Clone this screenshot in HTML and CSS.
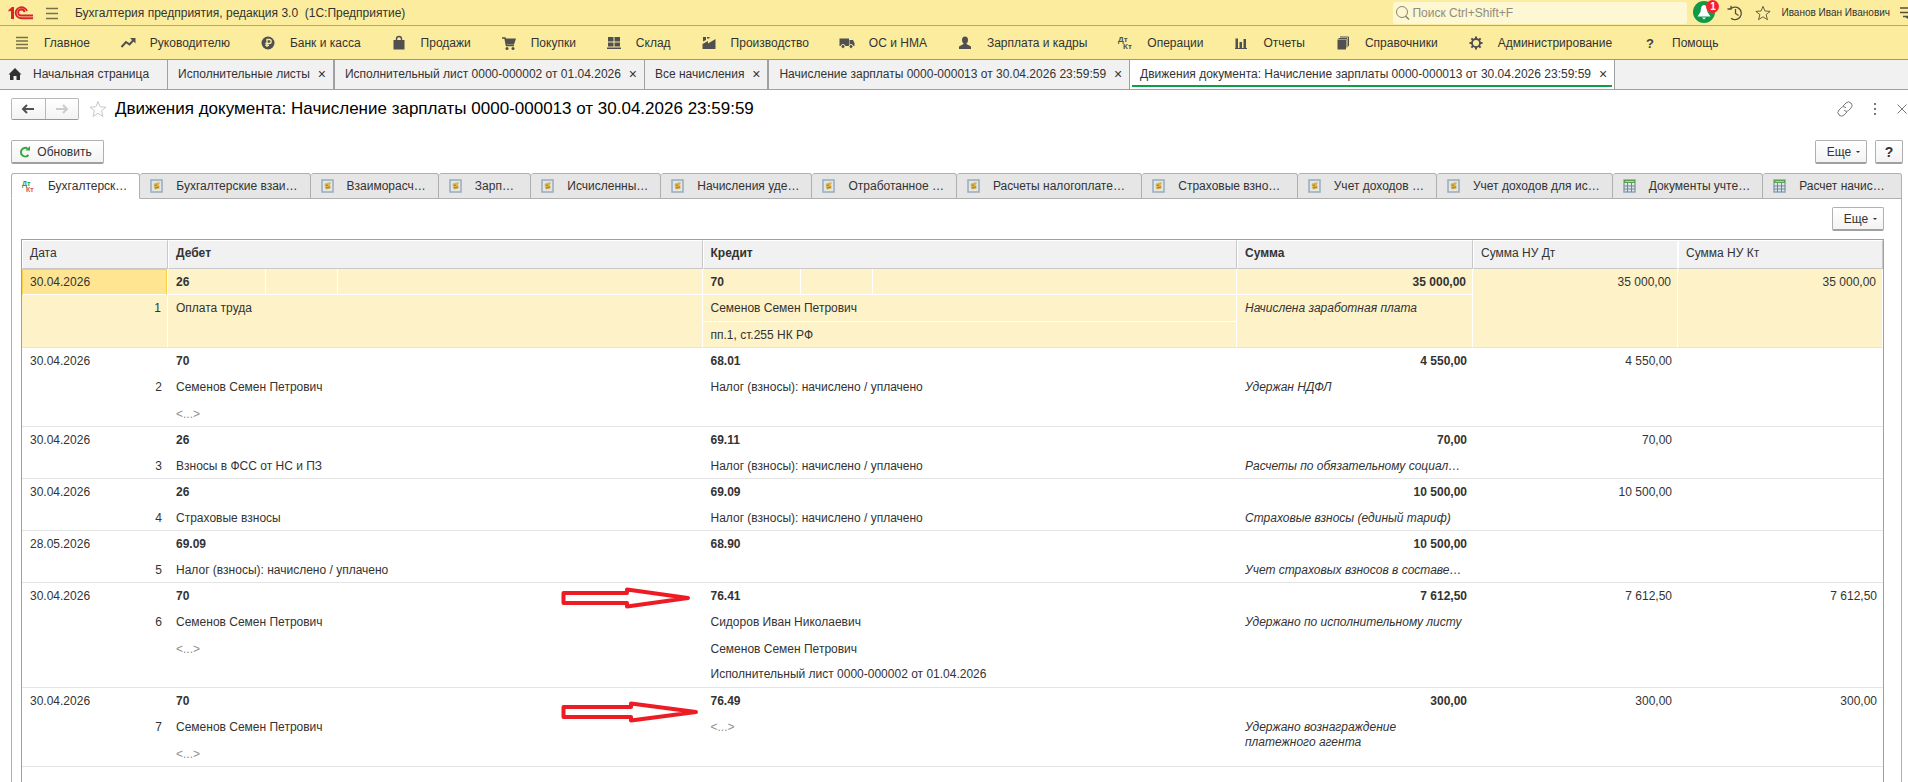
FILE: index.html
```
<!DOCTYPE html>
<html lang="ru">
<head>
    <meta charset="UTF-8">
    <meta name="viewport" content="width=device-width, initial-scale=1.0">
    <title>Бухгалтерия предприятия, редакция 3.0</title>
    <link rel="stylesheet" href="styles.css">
</head>
<body>
    <!-- Shared icons -->
    <svg class="sprite" aria-hidden="true">
        <symbol id="register" viewBox="0 0 14 14">
            <rect x="1" y="1" width="11" height="12" fill="#dfe6ec" stroke="#9aabba" stroke-width="1.500"/>
            <path d="M4 4.500L9.500 3V5L8.500 6L9.500 7V9.500L5 10.500L3.500 8L5 7L3.500 6z" fill="#dcb24a"/>
            <path d="M4.500 6.500L7 6M5 9L9 8" stroke="#a87c18"/>
        </symbol>
        <symbol id="sheet" viewBox="0 0 14 14">
            <rect x="1" y="1" width="11" height="12" fill="#dfe6ec" stroke="#8fa3b5" stroke-width="1.500"/>
            <rect x="1" y="1" width="11" height="3" fill="#5ba353"/>
            <path d="M1 7H12M1 10H12M4.500 4V13M8.500 4V13" stroke="#71869a"/>
            <path d="M2.500 2.500H11" stroke="#a8d5a0"/>
        </symbol>
        <symbol id="star" viewBox="0 0 18 18">
            <path d="M9 1.500L11.200 6.800L17 7.200L12.500 10.800L14 16.500L9 13.300L4 16.500L5.500 10.800L1 7.200L6.800 6.800z" fill="none" stroke="currentColor"/>
        </symbol>
    </svg>

    <header class="titlebar">
        <svg class="logo" viewBox="0 0 26 14" role="img" aria-label="1С">
            <path d="M0.500 4L4 1H6V13H3V5L0.500 5.500z" fill="#d9232e"/>
            <path d="M19 5A5.800 5.500 0 1 0 13.500 12.300H25M16.500 6A3.200 3 0 1 0 13.500 9.500H25" fill="none" stroke="#d9232e" stroke-width="1.900"/>
        </svg>
        <button class="plain" aria-label="Меню">
            <svg width="14" height="14" viewBox="0 0 14 14"><path d="M1 2.500H13M1 7.500H13M1 12.500H13" stroke="#77704a" stroke-width="1.300"/></svg>
        </button>
        <span class="app-name">Бухгалтерия предприятия, редакция 3.0 &nbsp;(1С:Предприятие)</span>
        <label class="search">
            <svg width="16" height="16" viewBox="0 0 16 16"><circle cx="7" cy="7" r="5.500" fill="none" stroke="#8a8568"/><path d="M10.500 11L14 14.500" stroke="#8a8568" stroke-width="1.500"/></svg>
            <input type="text" placeholder="Поиск Ctrl+Shift+F" aria-label="Поиск">
        </label>
        <button class="plain bell" aria-label="Оповещения">
            <svg width="22" height="22" viewBox="0 0 22 22"><circle cx="11" cy="11" r="11" fill="#0e9a48"/><path d="M11 4C8 4 8 8 7.500 11L4.500 15.500H17.500L14.500 11C14 8 14 4 11 4zM9 16.500H13L11 18.500z" fill="#fff"/></svg>
            <span class="badge">1</span>
        </button>
        <button class="plain history" aria-label="История">
            <svg width="16" height="16" viewBox="0 0 16 16"><path d="M3 4.500A6.300 6.300 0 1 1 4 13.200M0.500 4H4V0.800M8.500 4V8.500L11.500 10.500" fill="none" stroke="#55503a" stroke-width="1.300"/></svg>
        </button>
        <button class="plain favorites" aria-label="Избранное"><svg width="16" height="16"><use href="#star"/></svg></button>
        <a class="user" href="#">Иванов Иван Иванович</a>
        <button class="plain" aria-label="Настройки">
            <svg width="8" height="14" viewBox="0 0 8 14"><path d="M0 2H8M0 6.500H8M3 10.500H8" stroke="#55503a" stroke-width="1.500"/><path d="M4 10H8V13z" fill="#55503a"/></svg>
        </button>
    </header>

    <nav class="sections">
        <a href="#"><svg viewBox="0 0 18 18"><path d="M3 3.500H15M3 7H15M3 10.500H15M3 14H15" stroke="#77704a" stroke-width="1.300"/></svg>Главное</a>
        <a href="#"><svg viewBox="0 0 18 18"><path d="M2.500 13L7 8L10.500 10.500L15 5.500" fill="none" stroke="#505050" stroke-width="2"/><path d="M11 4H16.500V9.500z" fill="#505050"/></svg>Руководителю</a>
        <a href="#"><svg viewBox="0 0 18 18"><circle cx="9" cy="9" r="6.500" fill="#505050"/><path d="M8 13V5.500H10.200A2 2 0 0 1 10.200 9.500H6.300M6.300 11.300H10" fill="none" stroke="#fbec9e" stroke-width="1.300"/></svg>Банк и касса</a>
        <a href="#"><svg viewBox="0 0 18 18"><path d="M3.500 6H14.500V15.500H3.500z" fill="#505050"/><path d="M6.500 8V5A2.500 2.500 0 0 1 11.500 5V8" fill="none" stroke="#505050" stroke-width="1.400"/></svg>Продажи</a>
        <a href="#"><svg viewBox="0 0 18 18"><path d="M2 4H5L6.500 11.500H14" fill="none" stroke="#505050" stroke-width="1.500"/><path d="M5 4.500H16L14 10.500H6.500z" fill="#505050"/><circle cx="7" cy="14.500" r="1.500" fill="#505050"/><circle cx="13" cy="14.500" r="1.500" fill="#505050"/></svg>Покупки</a>
        <a href="#"><svg viewBox="0 0 18 18"><path d="M3 3H8.500V7.500H3zM9.500 3H15V7.500H9.500zM3 8.500H8.500V12.500H3zM9.500 8.500H15V12.500H9.500zM2 13.500H16V15H2z" fill="#505050"/></svg>Склад</a>
        <a href="#"><svg viewBox="0 0 18 18"><path d="M2.500 15V10L8 7V9.500L15.500 5V15zM3 3H6V6L3 7.500zM7 3H9.500V4.500H7z" fill="#505050"/></svg>Производство</a>
        <a href="#"><svg viewBox="0 0 18 18"><path d="M1.500 4.500H11V12H1.500zM11.500 6H15L16.500 9V12H11.500z" fill="#505050"/><circle cx="5" cy="12.500" r="2" fill="#505050" stroke="#fbec9e"/><circle cx="13" cy="12.500" r="2" fill="#505050" stroke="#fbec9e"/></svg>ОС и НМА</a>
        <a href="#"><svg viewBox="0 0 18 18"><ellipse cx="9" cy="6" rx="3" ry="3.500" fill="#505050"/><path d="M3 15V12.500L7.500 10V8H10.500V10L15 12.500V15z" fill="#505050"/></svg>Зарплата и кадры</a>
        <a href="#"><svg class="dtkt" viewBox="0 0 18 18"><text x="2" y="8">Дт</text><text x="7" y="15">Кт</text></svg>Операции</a>
        <a href="#"><svg viewBox="0 0 18 18"><path d="M3.500 4.500H6V14H3.500zM7.500 8H10V14H7.500zM11.500 5H14V14H11.500zM3 14H15V15H3z" fill="#505050"/></svg>Отчеты</a>
        <a href="#"><svg viewBox="0 0 18 18"><path d="M3.500 5.500H12V15.500H3.500z" fill="#505050"/><path d="M4.500 4.500H13V13.500M6 3H14.500V12" fill="none" stroke="#505050"/></svg>Справочники</a>
        <a href="#"><svg viewBox="0 0 18 18"><circle cx="9" cy="9" r="4" fill="none" stroke="#505050" stroke-width="1.800"/><path d="M9 2.500V5M9 13V15.500M2.500 9H5M13 9H15.500M4.400 4.400L6 6M12 12L13.600 13.600M4.400 13.600L6 12M12 6L13.600 4.400" stroke="#505050" stroke-width="2"/></svg>Администрирование</a>
        <a href="#"><svg class="help" viewBox="0 0 18 18"><text x="5" y="14">?</text></svg>Помощь</a>
    </nav>

    <div class="windows">
        <div class="window home">
            <a href="#"><svg width="14" height="14" viewBox="0 0 14 14"><path d="M7 1L13.500 7.500H12V13H8.500V9H5.500V13H2V7.500H0.500z" fill="#303030"/></svg>Начальная страница</a>
        </div>
        <div class="window"><a href="#">Исполнительные листы</a><button class="close" aria-label="Закрыть">×</button></div>
        <div class="window thick"><a href="#">Исполнительный лист 0000-000002 от 01.04.2026</a><button class="close" aria-label="Закрыть">×</button></div>
        <div class="window"><a href="#">Все начисления</a><button class="close" aria-label="Закрыть">×</button></div>
        <div class="window thick"><a href="#">Начисление зарплаты 0000-000013 от 30.04.2026 23:59:59</a><button class="close" aria-label="Закрыть">×</button></div>
        <div class="window active"><a href="#">Движения документа: Начисление зарплаты 0000-000013 от 30.04.2026 23:59:59</a><button class="close" aria-label="Закрыть">×</button></div>
    </div>

    <main class="form">
        <div class="form-title">
            <div class="history-buttons">
                <button aria-label="Назад"><svg width="14" height="12" viewBox="0 0 14 12"><path d="M13 6H3M6 2L2 6L6 10" fill="none" stroke="#505050" stroke-width="2"/></svg></button>
                <button aria-label="Вперед" disabled><svg width="14" height="12" viewBox="0 0 14 12"><path d="M1 6H11M8 2L12 6L8 10" fill="none" stroke="#cccccc" stroke-width="2"/></svg></button>
            </div>
            <button class="plain favorite" aria-label="В избранное"><svg width="18" height="18"><use href="#star"/></svg></button>
            <h1>Движения документа: Начисление зарплаты 0000-000013 от 30.04.2026 23:59:59</h1>
            <div class="form-actions">
                <button class="plain" aria-label="Ссылка"><svg width="16" height="16" viewBox="0 0 16 16"><path d="M6 5L9 2A3 3 0 0 1 14 7L11.500 9.500A3 3 0 0 1 7 9M10 11L7 14A3 3 0 0 1 2 9L4.500 6.500A3 3 0 0 1 9 7" fill="none" stroke="#777"/></svg></button>
                <button class="plain" aria-label="Еще действия"><svg width="4" height="12" viewBox="0 0 4 12"><path d="M1 0H3V2H1zM1 5H3V7H1zM1 10H3V12H1z" fill="#777"/></svg></button>
                <button class="plain" aria-label="Закрыть форму"><svg width="10" height="10" viewBox="0 0 10 10"><path d="M0.500 0.500L9.500 9.500M9.500 0.500L0.500 9.500" stroke="#777"/></svg></button>
            </div>
        </div>

        <div class="commands">
            <button class="btn refresh"><svg width="12" height="12" viewBox="0 0 12 12"><path d="M9.500 9A4.300 4.300 0 1 1 8.500 2.500" fill="none" stroke="#35a63f" stroke-width="2"/><path d="M6.500 4.500H11V0z" fill="#35a63f"/></svg>Обновить</button>
            <button class="btn more">Еще<i class="caret"></i></button>
            <button class="btn question">?</button>
        </div>

        <div class="tabs">
            <button class="active"><svg class="dtkt color" viewBox="0 0 14 14"><text x="0" y="7">Дт</text><text x="4" y="13">Кт</text></svg>Бухгалтерск…</button>
            <button><svg><use href="#register"/></svg>Бухгалтерские взаи…</button>
            <button><svg><use href="#register"/></svg>Взаиморасч…</button>
            <button class="roomy"><svg><use href="#register"/></svg>Зарп…</button>
            <button><svg><use href="#register"/></svg>Исчисленны…</button>
            <button><svg><use href="#register"/></svg>Начисления уде…</button>
            <button><svg><use href="#register"/></svg>Отработанное …</button>
            <button class="roomy"><svg><use href="#register"/></svg>Расчеты налогоплате…</button>
            <button class="roomy"><svg><use href="#register"/></svg>Страховые взно…</button>
            <button><svg><use href="#register"/></svg>Учет доходов …</button>
            <button><svg><use href="#register"/></svg>Учет доходов для ис…</button>
            <button><svg><use href="#sheet"/></svg>Документы учте…</button>
            <button class="roomy"><svg><use href="#sheet"/></svg>Расчет начис…</button>
        </div>

        <section class="panel">
            <div class="panel-commands"><button class="btn more">Еще<i class="caret"></i></button></div>
            <div class="grid">
                <table>
                    <colgroup><col class="col-date"><col><col><col class="col-sum"><col class="col-tax"><col class="col-tax"></colgroup>
                    <thead>
                        <tr><th>Дата</th><th class="bold">Дебет</th><th class="bold">Кредит</th><th class="bold">Сумма</th><th class="light">Сумма НУ Дт</th><th>Сумма НУ Кт</th></tr>
                    </thead>
                    <tbody>
                        <tr class="tall selected">
                            <td><div class="line current">30.04.2026</div><div class="line num">1</div></td>
                            <td><div class="line account"><b>26</b><span></span><span></span></div><div class="line">Оплата труда</div></td>
                            <td><div class="line account"><b>70</b><span></span><span></span></div><div class="line ruled">Семенов Семен Петрович</div><div class="line">пп.1, ст.255 НК РФ</div></td>
                            <td><div class="line num"><b>35 000,00</b></div><div class="note">Начислена заработная плата</div></td>
                            <td><div class="num">35 000,00</div></td>
                            <td><div class="num">35 000,00</div></td>
                        </tr>
                        <tr class="tall">
                            <td><div class="line">30.04.2026</div><div class="line num">2</div></td>
                            <td><div class="line"><b>70</b></div><div class="line">Семенов Семен Петрович</div><div class="line empty">&lt;...&gt;</div></td>
                            <td><div class="line"><b>68.01</b></div><div class="line">Налог (взносы): начислено / уплачено</div></td>
                            <td><div class="line num"><b>4 550,00</b></div><div class="note">Удержан НДФЛ</div></td>
                            <td><div class="num">4 550,00</div></td>
                            <td></td>
                        </tr>
                        <tr>
                            <td><div class="line">30.04.2026</div><div class="line num">3</div></td>
                            <td><div class="line"><b>26</b></div><div class="line">Взносы в ФСС от НС и ПЗ</div></td>
                            <td><div class="line"><b>69.11</b></div><div class="line">Налог (взносы): начислено / уплачено</div></td>
                            <td><div class="line num"><b>70,00</b></div><div class="note">Расчеты по обязательному социал…</div></td>
                            <td><div class="num">70,00</div></td>
                            <td></td>
                        </tr>
                        <tr>
                            <td><div class="line">30.04.2026</div><div class="line num">4</div></td>
                            <td><div class="line"><b>26</b></div><div class="line">Страховые взносы</div></td>
                            <td><div class="line"><b>69.09</b></div><div class="line">Налог (взносы): начислено / уплачено</div></td>
                            <td><div class="line num"><b>10 500,00</b></div><div class="note">Страховые взносы (единый тариф)</div></td>
                            <td><div class="num">10 500,00</div></td>
                            <td></td>
                        </tr>
                        <tr>
                            <td><div class="line">28.05.2026</div><div class="line num">5</div></td>
                            <td><div class="line"><b>69.09</b></div><div class="line">Налог (взносы): начислено / уплачено</div></td>
                            <td><div class="line"><b>68.90</b></div></td>
                            <td><div class="line num"><b>10 500,00</b></div><div class="note">Учет страховых взносов в составе…</div></td>
                            <td></td>
                            <td></td>
                        </tr>
                        <tr class="tall">
                            <td><div class="line">30.04.2026</div><div class="line num">6</div></td>
                            <td class="marked">
                                <div class="line"><b>70</b></div><div class="line">Семенов Семен Петрович</div><div class="line empty">&lt;...&gt;</div>
                                <svg class="arrow" width="130" height="22" viewBox="0 0 130 22"><path d="M2.500 6H66V2.500L127 11L66 19.500V16H2.500z"/></svg>
                            </td>
                            <td><div class="line"><b>76.41</b></div><div class="line">Сидоров Иван Николаевич</div><div class="line">Семенов Семен Петрович</div><div class="line">Исполнительный лист 0000-000002 от 01.04.2026</div></td>
                            <td><div class="line num"><b>7 612,50</b></div><div class="note">Удержано по исполнительному листу</div></td>
                            <td><div class="num">7 612,50</div></td>
                            <td><div class="num">7 612,50</div></td>
                        </tr>
                        <tr class="tall">
                            <td><div class="line">30.04.2026</div><div class="line num">7</div></td>
                            <td class="marked">
                                <div class="line"><b>70</b></div><div class="line">Семенов Семен Петрович</div><div class="line empty">&lt;...&gt;</div>
                                <svg class="arrow low" width="138" height="22" viewBox="0 0 138 22"><path d="M2.500 6H70V2.500L135 11L70 19.500V16H2.500z"/></svg>
                            </td>
                            <td><div class="line"><b>76.49</b></div><div class="line empty">&lt;...&gt;</div></td>
                            <td><div class="line num"><b>300,00</b></div><div class="note">Удержано вознаграждение<br>платежного агента</div></td>
                            <td><div class="num">300,00</div></td>
                            <td><div class="num">300,00</div></td>
                        </tr>
                    </tbody>
                </table>
            </div>
        </section>
    </main>
</body>
</html>
```
FILE: styles.css
```
* {
    box-sizing: border-box;
}
body {
    margin: 0;
    height: 100vh;
    display: flex;
    flex-direction: column;
    overflow: hidden;
    background-color: #fff;
    color: #333;
    font-family: "Liberation Sans", Arial, sans-serif;
    font-size: 12px;
}
a {
    color: inherit;
    text-decoration: none;
}
button,
input {
    font: inherit;
    color: inherit;
}
button {
    cursor: pointer;
}
svg {
    flex: none;
}
.sprite {
    position: absolute;
    width: 0;
    height: 0;
}
.plain {
    display: flex;
    padding: 0;
    border: none;
    background: none;
}

/* Title bar */
.titlebar {
    display: flex;
    flex: none;
    align-items: center;
    height: 26px;
    padding-left: 8px;
    border-bottom: 1px solid #b3a86e;
    background-color: #fbec9e;
}
.logo {
    width: 26px;
    height: 14px;
    margin-right: 11px;
}
.app-name {
    margin-left: 16px;
}
.search {
    display: flex;
    align-items: center;
    width: 294px;
    height: 22px;
    margin-left: auto;
    padding-left: 2px;
    border-radius: 2px;
    background-color: #fdf7d3;
}
.search input {
    flex: 1;
    min-width: 0;
    padding: 0 1px;
    border: none;
    outline: none;
    background: none;
}
.search input::placeholder {
    color: #918d78;
    opacity: 1;
}
.bell {
    position: relative;
    margin: 0 12px 2px 6px;
}
.badge {
    position: absolute;
    top: -1px;
    right: -4px;
    width: 13px;
    height: 13px;
    border-radius: 50%;
    background-color: #f5222d;
    color: #fff;
    font-size: 10px;
    font-weight: bold;
    line-height: 13px;
    text-align: center;
}
.history {
    margin-right: 12px;
}
.favorites {
    margin-right: 10px;
    color: #55503a;
}
.user {
    margin-right: 10px;
    font-size: 10px;
}

/* Sections */
.sections {
    display: flex;
    flex: none;
    gap: 29px;
    height: 34px;
    padding-left: 13px;
    border-bottom: 1px solid #a29a6c;
    background-color: #fbec9e;
    white-space: nowrap;
}
.sections a {
    display: flex;
    align-items: center;
    gap: 13px;
}
.sections svg {
    width: 18px;
    height: 18px;
}
.dtkt {
    overflow: visible;
}
.dtkt text {
    fill: #505050;
    font-size: 8px;
    font-weight: bold;
}
.help text {
    fill: #404040;
    font-size: 13px;
    font-weight: bold;
}

/* Open windows */
.windows {
    display: flex;
    flex: none;
    height: 30px;
    border-bottom: 1px solid #a0a0a0;
    background-color: #f1f1f1;
    white-space: nowrap;
}
.window {
    display: flex;
    align-items: center;
    padding: 0 4px 2px 10px;
    border-right: 1px solid #a0a0a0;
}
.window a {
    display: flex;
    align-items: center;
}
.window.home {
    padding: 0 18px 2px 8px;
}
.home a {
    gap: 11px;
}
.window.thick {
    border-left: 1px solid #a0a0a0;
}
.window.active {
    padding-bottom: 0;
    background: linear-gradient(#0f9d4b, #0f9d4b) 2px 25px / calc(100% - 4px) 2px no-repeat #fff;
}
.window.active a,
.window.active .close {
    margin-bottom: 2px;
}
.close {
    width: 14px;
    margin-left: 5px;
    padding: 0;
    border: none;
    background: none;
    font-size: 14px;
}

/* Form */
.form {
    display: flex;
    flex: 1;
    flex-direction: column;
    min-height: 0;
    padding: 8px 5px 0 11px;
}
.form-title {
    display: flex;
    flex: none;
    align-items: center;
    height: 22px;
    margin-bottom: 20px;
}
.history-buttons {
    display: flex;
    width: 68px;
    height: 22px;
    border: 1px solid #b8b8b8;
    border-bottom-color: #969696;
    border-radius: 2px;
}
.history-buttons button {
    display: flex;
    flex: 1;
    align-items: center;
    justify-content: center;
    padding: 0;
    border: none;
    background: linear-gradient(#fff, #f3f3f3);
}
.history-buttons button + button {
    border-left: 1px solid #b8b8b8;
}
.favorite {
    margin: 0 8px 0 10px;
    color: #c8c8c8;
}
h1 {
    margin: 0;
    color: #000;
    font-size: 17px;
    font-weight: normal;
    line-height: 20px;
}
.form-actions {
    display: flex;
    align-items: center;
    gap: 20px;
    margin-left: auto;
    margin-right: -4px;
}
.commands {
    display: flex;
    flex: none;
    gap: 8px;
    margin-bottom: 9px;
}
.btn {
    display: flex;
    align-items: center;
    justify-content: center;
    height: 24px;
    padding: 0;
    border: 1px solid #b0b0b0;
    border-bottom: 2px solid #a0a0a0;
    border-radius: 2px;
    background: linear-gradient(#fff, #f3f3f3);
}
.btn.refresh {
    gap: 6px;
    width: 93px;
    padding-right: 4px;
}
.btn.more {
    gap: 5px;
    width: 52px;
    margin-left: auto;
    padding-left: 5px;
}
.btn.question {
    width: 28px;
    font-size: 14px;
    font-weight: bold;
}
.caret {
    border: 2px solid transparent;
    border-top-color: #333;
    border-bottom: none;
}

/* Register tabs */
.tabs {
    display: flex;
    flex: none;
    height: 26px;
    margin-right: 1px;
    white-space: nowrap;
}
.tabs button {
    display: flex;
    flex: none;
    align-items: center;
    gap: 12px;
    padding: 0 12px 0 10px;
    border: 1px solid #b0b0b0;
    border-left: none;
    border-radius: 3px 3px 0 0;
    background-color: #e6e6e6;
}
.tabs .roomy {
    flex: 1 0 auto;
}
.tabs button.active {
    border-left: 1px solid #b0b0b0;
    border-bottom-color: #fff;
    background-color: #fff;
}
.tabs svg {
    width: 14px;
    height: 14px;
}
.dtkt.color text {
    fill: #1c9b50;
    font-size: 7px;
}
.dtkt.color text + text {
    fill: #e2504e;
}
.panel {
    display: flex;
    flex: 1;
    flex-direction: column;
    min-height: 0;
    margin-right: 1px;
    padding: 8px 17px 0 9px;
    border: 1px solid #b0b0b0;
    border-width: 0 1px;
}
.panel-commands {
    display: flex;
    flex: none;
    margin-bottom: 8px;
}

/* Entries */
.grid {
    flex: 1;
    min-height: 0;
    overflow: hidden;
    border: 1px solid #a0a0a0;
    border-bottom: none;
}
table {
    width: 100%;
    table-layout: fixed;
    border-collapse: separate;
    border-spacing: 0;
}
.col-date {
    width: 146px;
}
.col-sum {
    width: 236px;
}
.col-tax {
    width: 205px;
}
th {
    height: 29px;
    padding: 0 7px 3px;
    border: 1px solid #fff;
    border-right-color: #c8c8c8;
    border-bottom-color: #c8c8c8;
    background-color: #f1f1f1;
    font-weight: normal;
    text-align: left;
}
th.bold {
    font-weight: bold;
}
th.light {
    border-right-color: #fff;
}
td {
    padding: 0;
    border-bottom: 1px solid #e4e4e4;
    line-height: 26px;
    vertical-align: top;
}
.line {
    height: 26px;
    padding: 0 8px;
    white-space: nowrap;
}
.line + .line {
    height: 25px;
    line-height: 27px;
}
.tall .line + .line {
    height: 27px;
}
.tall .line + .line + .line {
    height: 25px;
}
.tall .line + .line + .line + .line {
    height: 26px;
}
.num,
.line.num {
    padding: 0 6px;
    text-align: right;
}
.note {
    padding: 6px 8px 4px;
    font-style: italic;
    line-height: 15px;
    white-space: nowrap;
}
.empty {
    color: #909090;
}
.selected td {
    border-right: 1px solid #fff;
    background-color: #fdf2c8;
}
.selected .line:first-child,
.ruled {
    border-bottom: 1px solid #fff;
}
.selected .current {
    padding: 0 7px;
    border: 1px solid #f8cf45;
    background-color: #ffe491;
    line-height: 24px;
}
.account {
    display: flex;
}
.account b {
    width: 89px;
}
.account span {
    width: 72px;
    border-left: 1px solid #fff;
}
.account span:last-child {
    flex: 1;
}
.marked {
    position: relative;
}

/* Red pointers to the credit accounts */
.arrow {
    position: absolute;
    top: 4px;
    right: 12px;
    fill: #fff;
    stroke: #ed1c24;
    stroke-width: 4;
    stroke-linejoin: round;
}
.arrow.low {
    top: 13px;
    right: 4px;
}
```
